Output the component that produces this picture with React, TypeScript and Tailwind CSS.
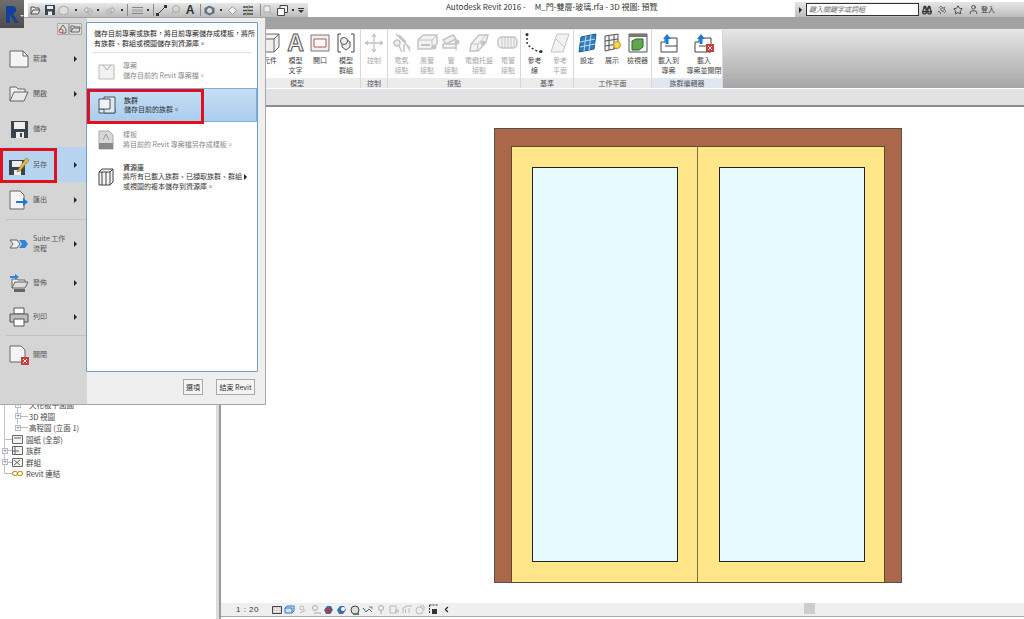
import type { ReactNode } from 'react';
import { ChevronLeft, Binoculars, Star, User, Satellite } from 'lucide-react';

const font = 'font-["Noto_Sans_CJK_TC","Liberation_Sans",sans-serif]';

function Svg({ w = 20, h = 20, children, className = '' }: { w?: number; h?: number; children: ReactNode; className?: string }) {
  return (
    <svg width={w} height={h} viewBox={`0 0 ${w} ${h}`} fill="none" className={`shrink-0 ${className}`}>
      {children}
    </svg>
  );
}

function Arrow({ className = '' }: { className?: string }) {
  return <span className={`w-0 h-0 border-y-[3px] border-y-transparent border-l-[3px] border-l-[#222] ${className}`} />;
}

function Slot({ w, children }: { w: number; children?: ReactNode }) {
  return (
    <span className="flex justify-center items-center shrink-0 h-full" style={{ width: w }}>
      {children}
    </span>
  );
}

function QatSep() {
  return <span className="w-px h-3 bg-[#8a8a8a]" />;
}

function QatDrop() {
  return <span className="w-0.5 h-0.5 bg-[#333]" />;
}

function QuickAccess() {
  return (
    <div className="ml-1 h-[14px] mt-[3px] w-[280px] flex items-center bg-gradient-to-b from-[#e8e8e8] to-[#bcbcbc]">
      <Slot w={14}><Svg w={11} h={10}><path d="M1 9V2h3l1 1h4v2M1 9l2-4h7L8 9z" stroke="#555" fill="#e6e6e6" /></Svg></Slot>
      <Slot w={15}><Svg w={10} h={10}><path d="M0 0h10v10H0z" fill="#3a4754" /><path d="M2 1h6v3H2zM3 6.500h4V10H3z" fill="#eee" /></Svg></Slot>
      <Slot w={13}><Svg w={11} h={10}><path d="M5.500 1l4.500 2v5l-4.500 2-4.500-2V3z" stroke="#aaa" fill="#ddd" /></Svg></Slot>
      <Slot w={11}><QatDrop /></Slot>
      <Slot w={14}><Svg w={11} h={9}><path d="M1 4l3-3v2h3c3 0 3 5 0 5H5V6h2c1 0 1-1 0-1H4v2z" stroke="#aaa" fill="#ddd" /></Svg></Slot>
      <Slot w={6}><QatDrop /></Slot>
      <Slot w={18}><Svg w={11} h={9}><path d="M10 4L7 1v2H4c-3 0-3 5 0 5h2V6H4c-1 0-1-1 0-1h3v2z" stroke="#aaa" fill="#ddd" /></Svg></Slot>
      <Slot w={5}><QatDrop /></Slot>
      <Slot w={6}><QatSep /></Slot>
      <Slot w={14}><Svg w={11} h={9}><path d="M0 1.500h11M0 7.500h11" stroke="#888" /><path d="M0 3h11v3H0z" fill="#b5b5b5" /></Svg></Slot>
      <Slot w={8}><QatDrop /></Slot>
      <Slot w={2}><QatSep /></Slot>
      <Slot w={14}><Svg w={11} h={11}><path d="M2 9l7-7" stroke="#444" /><path d="M0 8h3v3H0zM8 0h3v3H8z" fill="#333" /></Svg></Slot>
      <Slot w={14}><Svg w={10} h={10}><circle cx="6" cy="4" r="3.500" stroke="#aaa" /><path d="M1 9l3-3" stroke="#aaa" /></Svg></Slot>
      <Slot w={16}><span className="text-[12px] leading-[14px] font-bold text-[#333] font-['Liberation_Sans',sans-serif]">A</span></Slot>
      <Slot w={4}><QatSep /></Slot>
      <Slot w={14}><Svg w={11} h={11}><path d="M5.500 .5l5 2.500v5l-5 2.500-5-2.500V3z" fill="#66737e" /><circle cx="5.500" cy="5.500" r="2.500" fill="#ddd" /></Svg></Slot>
      <Slot w={10}><QatDrop /></Slot>
      <Slot w={12}><Svg w={9} h={9}><path d="M4.500 .5l4 4-4 4-4-4z" stroke="#999" fill="#eee" /></Svg></Slot>
      <Slot w={20}><Svg w={10} h={11}><path d="M0 2h10M0 5.500h10M0 9h10" stroke="#34506b" strokeWidth="1.300" /><path d="M6 0L3 11" stroke="#d8a020" /></Svg></Slot>
      <Slot w={4}><QatSep /></Slot>
      <Slot w={12}><Svg w={11} h={11}><path d="M1 1h6v6H1z" stroke="#aaa" fill="#eee" /><path d="M6 7l4 3" stroke="#aaa" /></Svg></Slot>
      <Slot w={16}><Svg w={11} h={11}><path d="M3 .5h7.500v7H3z" stroke="#444" fill="#eee" /><path d="M.5 3.500h7v7h-7z" stroke="#444" fill="#fff" /></Svg></Slot>
      <Slot w={6}><QatDrop /></Slot>
      <Slot w={10}>
        <span className="flex flex-col items-center">
          <span className="w-1.5 h-px bg-[#333] mb-px" />
          <span className="w-0 h-0 border-x-[3px] border-x-transparent border-t-[3px] border-t-[#333]" />
        </span>
      </Slot>
    </div>
  );
}

function TitleBar() {
  return (
    <div className="h-[17px] bg-white flex shrink-0 relative">
      <div className="w-6 shrink-0" />
      <QuickAccess />
      <div className={`absolute left-[446px] top-0 text-[8px] leading-[14px] text-[#333] whitespace-pre ${font}`}>
        Autodesk Revit 2016 -     M_門-雙層-玻璃.rfa - 3D 視圖: 預覽
      </div>
      <div className="ml-auto mt-0.5 w-[229px] h-[15px] flex items-center bg-gradient-to-b from-[#e6e6e6] to-[#bdbdbd]">
        <Arrow className="ml-[4px] mr-[2px]" />
        <div className={`ml-[2px] w-[113px] h-[13px] bg-white border border-[#333] pl-0.5 text-[7px] leading-[11px] italic text-[#666] ${font}`}>
          鍵入關鍵字或詞組
        </div>
        <Binoculars size={10} strokeWidth={3} className="ml-[3px] text-[#333]" />
        <Satellite size={10} className="ml-[5px] text-[#555]" />
        <Star size={10} className="ml-[6px] text-[#333]" />
        <User size={11} className="ml-[5px] text-[#444]" />
        <span className={`ml-[2px] text-[7px] leading-[13px] text-[#333] ${font}`}>登入</span>
      </div>
    </div>
  );
}

function Tool({ w, label, dim, icon }: { w: number; label: string[]; dim?: boolean; icon: ReactNode }) {
  return (
    <div className="flex flex-col items-center pt-[2px] shrink-0" style={{ width: w }}>
      <div className="h-[22px] flex items-center justify-center">{icon}</div>
      <div className={`mt-[2px] text-center whitespace-nowrap text-[7px] leading-[9.500px] ${dim ? 'text-[#a8a8a8]' : 'text-[#444]'} ${font}`}>
        {label.map((l) => (
          <div key={l}>{l}</div>
        ))}
      </div>
    </div>
  );
}

function Panel({ w, title, children, blue, pad = 0 }: { w: number; title: string; children: ReactNode; blue?: boolean; pad?: number }) {
  return (
    <div className="h-full flex flex-col border-r border-[#d8d8d8] shrink-0" style={{ width: w }}>
      <div className="flex-1 flex" style={{ paddingLeft: pad }}>{children}</div>
      <div className={`h-[10px] text-center text-[7px] leading-[10px] text-[#555] ${blue ? 'bg-[#dfe7f3]' : 'bg-[#ececec]'} ${font}`}>{title}</div>
    </div>
  );
}

const grey = '#c4c4c4';
const ConnectorIcon = (
  <Svg w={20} h={20}>
    <circle cx="5" cy="10" r="3" stroke={grey} fill="#eee" strokeWidth="1.500" />
    <path d="M4 1l14 14M7 2l7 7M7 13l3 6M12 11v8M15 12l3 6" stroke={grey} strokeWidth="1.500" />
  </Svg>
);
const DuctIcon = (
  <Svg w={21} h={19}>
    <path d="M1 6l5-5h14v9l-5 5H1z" stroke={grey} fill="#f2f2f2" strokeWidth="1.500" />
    <path d="M1 6h14v9M15 6l5-5" stroke={grey} />
    <path d="M4 10h9v2H4z" fill={grey} />
    <circle cx="17" cy="13" r="2.500" fill={grey} />
  </Svg>
);
const PipeIcon = (
  <Svg w={20} h={20}>
    <path d="M2 7l10-5 3 4-10 5z" stroke={grey} fill="#f2f2f2" strokeWidth="1.500" />
    <path d="M2 11h13v4H2z" stroke={grey} fill="#f2f2f2" strokeWidth="1.500" />
    <path d="M15 8v10" stroke={grey} />
    <circle cx="16" cy="9" r="2.500" fill={grey} />
  </Svg>
);
const TrayIcon = (
  <Svg w={20} h={20}>
    <path d="M1 18l1-7 8-9h9l-2 7-8 9z" stroke={grey} fill="#f2f2f2" strokeWidth="1.500" />
    <path d="M2 11h7l-1 7M9 11l8-9" stroke={grey} />
    <circle cx="14" cy="10" r="2.500" fill={grey} />
  </Svg>
);
const ConduitIcon = (
  <Svg w={22} h={18}>
    <rect x="1" y="3" width="19" height="11" rx="4" stroke={grey} fill="#f2f2f2" strokeWidth="1.500" />
    <path d="M5 3v11M8 3v11M11 3v11M14 3v11M17 3v11" stroke={grey} />
  </Svg>
);

function Ribbon() {
  return (
    <div className="h-[60px] flex shrink-0 bg-white border-t border-[#e8e8e8] pb-px">
      <div className="w-[234px] shrink-0" />
      <Panel w={127} title="模型" pad={23}>
        <Tool w={26} label={['元件']} icon={<Svg w={22} h={20}><path d="M1 6l5-5h14v13l-5 5H1z" fill="#f0f0f0" stroke="#666" /><path d="M1 6h14v13M15 6l5-5" stroke="#666" /></Svg>} />
        <Tool w={25} label={['模型', '文字']} icon={<span className="text-[23px] leading-[22px] font-bold text-[#f4f4f4] [-webkit-text-stroke:1px_#555] font-['Liberation_Sans',sans-serif]">A</span>} />
        <Tool w={24} label={['開口']} icon={<Svg w={20} h={20}><path d="M1 2h18v16H1z" fill="#efefef" stroke="#777" /><path d="M4 6h12v8H4z" fill="#fff" stroke="#c0504d" /></Svg>} />
        <Tool w={28} label={['模型', '群組']} icon={<Svg w={20} h={20}><path d="M5 1H2v18h3M15 1h3v18h-3" stroke="#444" /><path d="M6 9l4-3 4 3v5l-4 3-4-3z" fill="#eee" stroke="#555" /><circle cx="8" cy="8" r="3.500" fill="#eee" stroke="#555" /></Svg>} />
      </Panel>
      <Panel w={27} title="控制">
        <Tool w={26} dim label={['控制']} icon={<Svg w={20} h={20}><path d="M10 1v18M1 10h18M10 1l-2 3M10 1l2 3M10 19l-2-3M10 19l2-3M1 10l3-2M1 10l3 2M19 10l-3-2M19 10l-3 2" stroke={grey} strokeWidth="1.300" /></Svg>} />
      </Panel>
      <Panel w={133} title="接點">
        <Tool w={27} dim label={['電氣', '接點']} icon={ConnectorIcon} />
        <Tool w={24} dim label={['風管', '接點']} icon={DuctIcon} />
        <Tool w={24} dim label={['管', '接點']} icon={PipeIcon} />
        <Tool w={32} dim label={['電纜托盤', '接點']} icon={TrayIcon} />
        <Tool w={26} dim label={['電管', '接點']} icon={ConduitIcon} />
      </Panel>
      <Panel w={53} title="基準">
        <Tool w={27} label={['參考', '線']} icon={<Svg w={20} h={20}><path d="M2 1v8c0 4 8 9 14 10" stroke="#333" strokeDasharray="2 2" strokeWidth="1.500" /><circle cx="2" cy="1.500" r="1.500" fill="#333" /><circle cx="16" cy="18.500" r="1.500" fill="#333" /></Svg>} />
        <Tool w={24} dim label={['參考', '平面']} icon={<Svg w={20} h={20}><path d="M7 1h12l-6 18H1z" fill="#f2f2f2" stroke={grey} /><path d="M5 5l10 10" stroke={grey} /></Svg>} />
      </Panel>
      <Panel w={78} title="工作平面">
        <Tool w={26} label={['設定']} icon={<Svg w={20} h={20}><path d="M4 4l15-3-2 15-15 3z" fill="#2f7fc1" stroke="#1c5a90" /><path d="M9 3l-2 15M14 2l-2 15M3 9l15-3M3 14l15-3" stroke="#bcdcf2" /></Svg>} />
        <Tool w={24} label={['展示']} icon={<Svg w={20} h={20}><path d="M3 3l13-2v14L3 18z" fill="#f2f2f2" stroke="#555" /><path d="M7 3v14M12 2v14M3 8l13-2M3 13l13-2" stroke="#555" /><circle cx="15" cy="12" r="3.500" fill="#f4d84a" stroke="#b89b20" /></Svg>} />
        <Tool w={27} label={['檢視器']} icon={<Svg w={20} h={20}><path d="M1 1h18v18H1z" fill="#f4f4f4" stroke="#555" /><path d="M1 1h18v3H1z" fill="#777" /><path d="M4 8l4-2h7v8l-4 3H4z" fill="#5fa84f" stroke="#2f6b2a" /></Svg>} />
      </Panel>
      <Panel w={71} title="族群編輯器" blue>
        <Tool w={33} label={['載入到', '專案']} icon={<Svg w={20} h={20}><path d="M2 9h4V5h12v14H2z" fill="#fff" stroke="#444" /><path d="M6 13h12" stroke="#444" /><path d="M8 1l4 5H9.500v5h-3V6H4z" fill="#1a78d6" /></Svg>} />
        <Tool w={38} label={['載入', '專案並關閉']} icon={<Svg w={22} h={20}><path d="M2 9h4V5h12v14H2z" fill="#fff" stroke="#444" /><path d="M6 13h12" stroke="#444" /><path d="M8 1l4 5H9.500v5h-3V6H4z" fill="#1a78d6" /><path d="M13 11h8v8h-8z" fill="#cf3a3a" /><path d="M15 13l4 4M19 13l-4 4" stroke="#fff" /></Svg>} />
      </Panel>
      <div className="flex-1 bg-gradient-to-b from-[#e6e6e6] to-[#a6a6a6]" />
    </div>
  );
}

function MenuRow({ icon, label, arrow = true, active, h = 35 }: { icon: ReactNode; label: ReactNode; arrow?: boolean; active?: boolean; h?: number }) {
  return (
    <div className={`flex items-center pl-[9px] pr-2 ${active ? 'bg-[#b6d4ef]' : ''}`} style={{ height: h }}>
      <div className="w-5 flex justify-center">{icon}</div>
      <div className={`ml-[4px] text-[7px] leading-[9.500px] text-[#555] flex-1 ${font}`}>{label}</div>
      {arrow && <Arrow className="mr-0.5" />}
    </div>
  );
}

function SubItem({ icon, title, lines, dim, active, more, h }: { icon: ReactNode; title: string; lines: string[]; dim?: boolean; active?: boolean; more?: boolean; h: number }) {
  return (
    <div className={`flex items-center pl-[9px] pr-2.5 ${active ? 'bg-gradient-to-b from-[#c7dff5] to-[#a9cdee] border border-[#7fb0dc]' : ''}`} style={{ height: h }}>
      <div className="w-[20px] flex justify-center">{icon}</div>
      <div className={`ml-[7px] flex-1 text-[7px] leading-[9.500px] whitespace-nowrap ${dim ? 'text-[#888]' : 'text-[#333]'} ${font}`}>
        <div className={dim ? '' : 'font-medium'}>{title}</div>
        {lines.map((l) => (
          <div key={l}>{l}</div>
        ))}
      </div>
      {more && <Arrow />}
    </div>
  );
}

const PageIcon = (
  <Svg w={20} h={18}>
    <path d="M1 1h13l5 5v11H1z" fill="#f4f4f4" stroke="#666" />
    <path d="M14 1v5h5" stroke="#666" />
  </Svg>
);

function AppMenu() {
  return (
    <div className="absolute left-0 top-[18px] w-[266px] h-[387px] bg-[#efefef] border-r border-b border-[#a8a8a8] flex">
      <div className="w-[87px] shrink-0 bg-[#d5d5d5] flex flex-col">
        <div className="h-6 flex justify-end items-start pt-[5px] pr-[5px]">
          <Svg w={12} h={12}><path d="M.5.500h11v11H.5z" fill="#dcdcdc" stroke="#aaa" /><path d="M3 6l3-4 3 4v4H5" stroke="#666" /><circle cx="4" cy="8" r="2" stroke="#b8443a" /></Svg>
          <Svg w={13} h={12}><path d="M.5.500h12v11H.5z" fill="#dcdcdc" stroke="#aaa" /><path d="M2 9V3h3l1 1h5v1H4L2 9h8l1-4" stroke="#666" /></Svg>
        </div>
        <MenuRow h={34} icon={PageIcon} label="新建" />
        <MenuRow h={35} icon={<Svg w={20} h={18}><path d="M1 16V2h6l2 2h7v3" stroke="#666" fill="#eee" /><path d="M1 16l4-9h14l-4 9z" fill="#e8e8e8" stroke="#666" /></Svg>} label="開啟" />
        <MenuRow h={36} arrow={false} icon={<Svg w={17} h={17}><path d="M0 0h17v17H0z" fill="#39434e" /><path d="M3 1h11v7H3z" fill="#eee" /><path d="M5 11h8v6H5z" fill="#eee" /><path d="M9 12h2v4H9z" fill="#39434e" /></Svg>} label="儲存" />
        <MenuRow h={35} active icon={<Svg w={20} h={20}><path d="M0 5h16v15H0z" fill="#39434e" /><path d="M3 6h10v6H3zM5 15h7v5H5z" fill="#eee" /><path d="M9 15l8-12 3 2-9 11-3 1z" fill="#e6b84a" stroke="#8a6a1a" strokeWidth=".6" /></Svg>} label="另存" />
        <MenuRow h={36} icon={<Svg w={20} h={20}><path d="M1 1h10l4 4v14H1z" fill="#f4f4f4" stroke="#666" /><path d="M7 11h7V8l5 4-5 4v-3H7z" fill="#1a78d6" /></Svg>} label="匯出" />
        <div className="h-px bg-[#c2c2c2] ml-1.5 mt-px" />
        <MenuRow h={47} icon={<Svg w={20} h={10}><path d="M1 1h7l3 4-3 4H1l3-4z" fill="#eee" stroke="#666" /><path d="M10 1h6l3 4-3 4h-6l3-4z" fill="#2d86dc" /></Svg>} label={<>Suite 工作<br />流程</>} />
        <MenuRow h={32} icon={<Svg w={20} h={20}><path d="M3 15V6h5l1 1h7v2" stroke="#666" fill="#eee" /><path d="M3 15l3-6h13l-3 6z" fill="#ddd" stroke="#666" /><path d="M5 16h11v3H5z" fill="#666" /><path d="M1 3h5V1l4 3-4 3V5H1z" fill="#2d86dc" /></Svg>} label="發佈" />
        <MenuRow h={36} icon={<Svg w={20} h={20}><path d="M5 1h10v6H5z" fill="#fff" stroke="#555" /><path d="M1 7h18v8H1z" fill="#b9bec2" stroke="#555" /><path d="M5 12h10v7H5z" fill="#fff" stroke="#555" /></Svg>} label="列印" />
        <div className="h-px bg-[#c2c2c2] ml-1.5" />
        <MenuRow h={37} arrow={false} icon={<Svg w={20} h={20}><path d="M1 1h11l4 4v12H1z" fill="#f4f4f4" stroke="#666" /><path d="M12 12h8v8h-8z" fill="#cf3a3a" /><path d="M14 14l4 4M18 14l-4 4" stroke="#fff" /></Svg>} label="關閉" />
      </div>
      <div className="flex-1 flex flex-col items-start">
        <div className="w-[172px] h-[350px] mt-1 -ml-px bg-white border border-[#6f9fd0] rounded-[1px]">
          <div className={`px-[7px] pt-[5px] text-[7px] leading-[10px] text-[#222] whitespace-nowrap ${font}`}>
            <div>儲存目前專案或族群，將目前專案儲存成樣板，將所</div>
            <div>有族群、群組或視圖儲存到資源庫。</div>
          </div>
          <div className="h-px bg-[#e0e0e0] mx-[6px] mt-[4px]" />
          <SubItem h={35} dim title="專案" lines={['儲存目前的 Revit 專案檔。']} icon={<Svg w={18} h={18}><path d="M2 3h15v14H2z" fill="#f2f2f2" stroke="#bbb" /><path d="M6 3l4 5 4-5" stroke="#aaa" /></Svg>} />
          <SubItem h={34} active title="族群" lines={['儲存目前的族群。']} icon={<Svg w={18} h={18}><path d="M1 13h16v4H1z" fill="#dfe8f2" stroke="#4a5560" /><path d="M6 1h11v16H6z" fill="#dfe8f2" stroke="#4a5560" /><path d="M1 3h11v10H1z" fill="#eef3f8" stroke="#4a5560" /></Svg>} />
          <SubItem h={35} dim title="樣板" lines={['將目前的 Revit 專案檔另存成樣板。']} icon={<Svg w={16} h={20}><path d="M1 1h10l4 4v14H1z" fill="#d8d8d8" stroke="#aaa" /><path d="M1 13h14v6H1z" fill="#888" /><path d="M5 10l3-6 3 6" stroke="#999" /></Svg>} />
          <SubItem h={40} more title="資源庫" lines={['將所有已載入族群、已擷取族群、群組', '或視圖的複本儲存到資源庫。']} icon={<Svg w={16} h={20}><path d="M1 5l3-3h11v13l-3 3H1z" fill="#f4f4f4" stroke="#444" /><path d="M4 5v13M8 5v13M12 5v13M1 5h11M12 5l3-3" stroke="#444" /></Svg>} />
        </div>
        <div className="flex-1 w-full flex items-center justify-end gap-[13px] pr-[10px] -mt-0.5">
          <div className={`w-5 h-[16px] border border-[#aaa] bg-[#f4f4f4] text-center text-[7px] leading-[14px] text-[#333] ${font}`}>選項</div>
          <div className={`w-[39px] h-[16px] border border-[#aaa] bg-[#f4f4f4] text-center text-[7px] leading-[14px] text-[#333] whitespace-nowrap ${font}`}>結束 Revit</div>
        </div>
      </div>
      <div className="absolute left-0 top-[130px] w-[57px] h-[35px] border-[3px] border-[#e0101e]" />
      <div className="absolute left-[87px] top-[71px] w-[117px] h-[35px] border-[3px] border-[#e0101e]" />
    </div>
  );
}

function TreeRow({ box, label, icon, child }: { box?: boolean; label: string; icon?: ReactNode; child?: boolean }) {
  return (
    <div className={`h-[11.500px] flex items-center text-[7.500px] text-[#444] whitespace-nowrap ${font}`}>
      {child ? (
        <>
          <span className="w-[15px]" />
          <span className="w-[6px] h-[6px] border border-[#bbb] bg-white text-[6px] leading-[4px] text-center text-[#36c]">+</span>
          <span className="w-[7px] h-px bg-[#bbb] mr-px" />
        </>
      ) : (
        <>
          <span className="w-[2px]" />
          {box ? (
            <span className="w-[6px] h-[6px] border border-[#bbb] bg-white text-[6px] leading-[4px] text-center text-[#36c]">+</span>
          ) : (
            <span className="w-[3px] ml-[3px] h-px bg-[#bbb]" />
          )}
          <span className="w-[4px] h-px bg-[#bbb]" />
          <span className="mr-[3px] flex w-[11px] justify-center">{icon}</span>
        </>
      )}
      {label}
    </div>
  );
}

function TreeIcon({ d }: { d: string }) {
  return (
    <Svg w={11} h={9}>
      <path d="M.5.500h10v8H.5z" fill="#f2f2f2" stroke="#666" />
      <path d={d} stroke="#666" />
    </Svg>
  );
}

function StatusIcons() {
  return (
    <div className="flex items-center h-full">
      <Slot w={13}><Svg w={10} h={8}><path d="M.5.500h9v7h-9z" fill="#ccc" stroke="#444" /><path d="M1 3h8M1 5.500h8M3.500 1v6M6.500 1v6" stroke="#fff" strokeWidth=".6" /></Svg></Slot>
      <Slot w={13}><Svg w={11} h={9}><path d="M1 3l2-2h7v5L8 8H1z" fill="#cfe3f6" stroke="#2a78c8" /><path d="M1 3h7v5" stroke="#2a78c8" /></Svg></Slot>
      <Slot w={13}><Svg w={10} h={9}><circle cx="4" cy="3" r="2" stroke="#bbb" /><path d="M2 8l6-3" stroke="#bbb" /></Svg></Slot>
      <Slot w={13}><Svg w={10} h={9}><circle cx="4" cy="3" r="2.500" stroke="#aaa" /><path d="M3 8h7" stroke="#aaa" /></Svg></Slot>
      <Slot w={13}><Svg w={11} h={10}><path d="M1 5l3-4h4l2 4-3 4H3z" fill="#3c6fb0" /><path d="M3 3l5 5M8 3l-5 5" stroke="#d6242a" strokeWidth="1.500" /></Svg></Slot>
      <Slot w={13}><Svg w={11} h={10}><path d="M1 5l3-4h4l2 4-3 4H3z" fill="#3c6fb0" /><circle cx="7" cy="4" r="2" fill="#fff" /></Svg></Slot>
      <Slot w={13}><Svg w={10} h={10}><circle cx="5" cy="5" r="4" fill="#ddd" stroke="#444" /><path d="M3 8h6v2H3z" fill="#4a8a60" /></Svg></Slot>
      <Slot w={13}><Svg w={11} h={9}><path d="M1 3l3 4 3-3 3 3" stroke="#4a6a8a" /><path d="M7 2h3v2" stroke="#4a8a60" /></Svg></Slot>
      <Slot w={13}><Svg w={6} h={9}><circle cx="3" cy="3" r="2.500" stroke="#aaa" /><path d="M3 6v3" stroke="#aaa" /></Svg></Slot>
      <Slot w={13}><Svg w={10} h={9}><path d="M1 1h6v7H1z" stroke="#bbb" /><circle cx="8" cy="6" r="1.500" stroke="#bbb" /></Svg></Slot>
      <Slot w={13}><Svg w={10} h={9}><path d="M1 8V3l4-2h5M3.500 8V4M7 8V3" stroke="#bbb" /></Svg></Slot>
      <Slot w={14}><Svg w={10} h={10}><circle cx="4.500" cy="5.500" r="3.500" stroke="#bbb" /><path d="M5 1h4v4" stroke="#bbb" /></Svg></Slot>
      <Slot w={13}><Svg w={9} h={11}><path d="M.5 1h8M.5 1v9" stroke="#333" strokeDasharray="2 1" /><path d="M3 5h5v5H3z" fill="#333" /></Svg></Slot>
      <Slot w={13}><ChevronLeft size={9} strokeWidth={3} className="text-[#222]" /></Slot>
    </div>
  );
}

function StatusBar() {
  return (
    <div className="shrink-0 h-[14px] bg-[#efefef] border-b border-[#aaa] flex items-center relative">
      <span className="ml-[15px] w-[34px] shrink-0 text-[8px] leading-[13px] tracking-[.5px] text-[#333] font-['Liberation_Sans',sans-serif]">1 : 20</span>
      <StatusIcons />
      <div className="absolute left-[583px] top-0 h-[11px] w-[11px] bg-[#cdcdcd]" />
    </div>
  );
}

function DoorDrawing() {
  return (
    <svg width="408" height="456" viewBox="0 0 408 456" className="shrink-0">
      <rect x=".5" y=".5" width="407" height="454" fill="#ab6749" stroke="#55524a" />
      <rect x="17.500" y="18.500" width="373" height="436" fill="#ffe688" stroke="#5c4a30" />
      <path d="M203.500 18.500V454.500" stroke="#77714f" />
      <rect x="38.500" y="39.500" width="145" height="394" fill="#e5fbff" stroke="#222" />
      <rect x="225.500" y="39.500" width="145" height="394" fill="#e5fbff" stroke="#222" />
    </svg>
  );
}

export default function App() {
  return (
    <div className={`relative w-[1024px] h-[619px] overflow-hidden bg-white flex flex-col ${font}`}>
      <TitleBar />
      <div className="h-3 shrink-0 bg-[#a2a2a2]" />
      <Ribbon />
      <div className="h-[16px] shrink-0 bg-[#e2e2e4]" />
      <div className="h-0.5 shrink-0 bg-[#8c8c8c]" />
      <div className="flex-1 flex min-h-0">
        <div className="w-[216px] shrink-0 bg-white flex flex-col justify-start pt-[292px] relative">
          <div className="absolute left-[4px] top-[290px] h-[77px] w-px bg-[#c4c4c4]" />
          <div className="absolute left-[17px] top-[290px] h-[27px] w-px bg-[#c4c4c4]" />
          <div className="relative">
            <TreeRow child label="天花板平面圖" />
            <TreeRow child label="3D 視圖" />
            <TreeRow child label="高程圖 (立面 1)" />
            <TreeRow label="圖紙 (全部)" icon={<TreeIcon d="M2 3h7" />} />
            <TreeRow box label="族群" icon={<TreeIcon d="M3 1v7M1 5h6" />} />
            <TreeRow box label="群組" icon={<TreeIcon d="M2 2l6 5M8 2L2 7" />} />
            <TreeRow label="Revit 連結" icon={<Svg w={11} h={5}><rect x=".5" y=".5" width="5" height="4" rx="2" stroke="#c79a1e" strokeWidth="1.200" /><rect x="5.500" y=".5" width="5" height="4" rx="2" stroke="#c79a1e" strokeWidth="1.200" /></Svg>} />
          </div>
        </div>
        <div className="w-[3px] shrink-0 bg-[#dcdcdc]" />
        <div className="w-0.5 shrink-0 bg-[#9a9a9a]" />
        <div className="flex-1 flex flex-col min-w-0">
          <div className="flex-1 pt-[21px] pl-[273px]">
            <DoorDrawing />
          </div>
          <StatusBar />
          <div className="h-0.5 shrink-0" />
        </div>
      </div>
      <AppMenu />
      <div className="absolute left-0 top-0 w-6 h-7 bg-gradient-to-b from-[#6e6e6e] to-[#4c4c4c] flex items-center">
        <Svg w={16} h={20} className="ml-1"><path d="M2 19V2h6c5 0 6 6 1 8l6 9h-4L6 11v8z" fill="#14409c" /></Svg>
        <span className="w-0 h-0 border-x-2 border-x-transparent border-t-2 border-t-[#ddd] mt-1" />
      </div>
    </div>
  );
}
